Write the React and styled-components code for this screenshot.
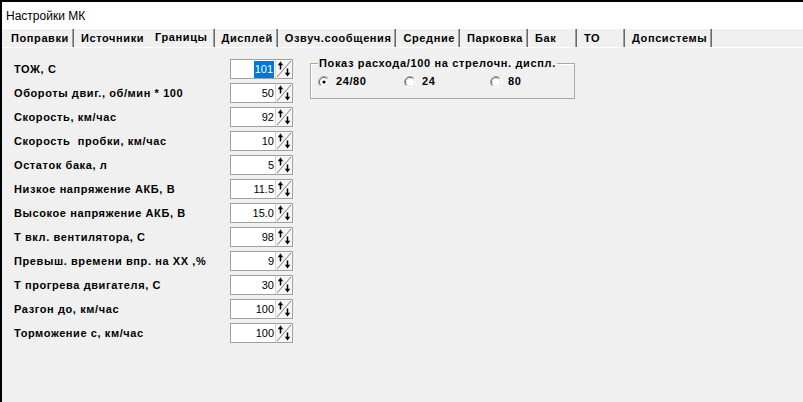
import React from "react";
import styled, { createGlobalStyle } from "styled-components";

const GlobalStyle = createGlobalStyle`
  html, body {
    margin: 0;
    padding: 0;
    background: #f0f0f0;
  }
  body {
    font-family: "Liberation Sans", Arial, sans-serif;
    color: #000;
  }
`;

const Window = styled.div`
  width: 803px;
  height: 402px;
  box-sizing: border-box;
  border-top: 2px solid #000;
  border-left: 2px solid #000;
  background: #f0f0f0;
  display: flex;
  flex-direction: column;
  overflow: hidden;
`;

const TitleBar = styled.div`
  height: 27px;
  flex: none;
  background: #fff;
  display: flex;
  align-items: center;
  padding-left: 4px;
  font-size: 12px;
`;

const TabStrip = styled.div`
  height: 18px;
  flex: none;
  display: flex;
  align-items: stretch;
  padding-left: 2px;
  border-bottom: 1px solid #fff;
`;

const Tab = styled.div`
  display: flex;
  align-items: center;
  box-sizing: border-box;
  min-width: ${(p) => p.$min || 0}px;
  padding: ${(p) => (p.$active ? "0 6px 2px 8px" : "0 4px 0 7px")};
  margin-left: ${(p) => (p.$active ? "-2px" : "0")};
  border-right: 1px solid #696969;
  box-shadow: -1px 0 0 #a0a0a0 inset;
  font-size: 11px;
  font-weight: bold;
  letter-spacing: 0.6px;
  white-space: nowrap;
  position: relative;
  z-index: ${(p) => (p.$active ? 1 : 0)};
  background: #f0f0f0;
`;

const Body = styled.div`
  display: flex;
  align-items: flex-start;
  padding: 9px 0 0 12px;
`;

const Form = styled.div`
  display: flex;
  flex-direction: column;
`;

const Row = styled.div`
  display: grid;
  grid-template-columns: 216px 63px;
  align-items: center;
  height: 24px;
`;

const Label = styled.span`
  font-size: 11px;
  font-weight: bold;
  letter-spacing: 0.6px;
  white-space: pre;
`;

const Spin = styled.div`
  display: flex;
  height: 20px;
  box-sizing: border-box;
  border: 1px solid #a0a0a0;
  background: #fff;
`;

const Value = styled.div`
  flex: 1;
  display: flex;
  align-items: center;
  justify-content: flex-end;
  padding-right: 1px;
  font-size: 11px;
`;

const Selected = styled.span`
  background: #0078d7;
  color: #fff;
  padding: 2px 1px 2px 1px;
  line-height: 13px;
`;

const Arrows = styled.div`
  width: 16px;
  flex: none;
  border-left: 1px solid #d8d8d8;
  background: #f6f6f6;
  display: flex;
  align-items: center;
`;

const Group = styled.fieldset`
  margin: 0 0 0 17px;
  padding: 0 7px 0 7px;
  width: 265px;
  height: 42px;
  box-sizing: border-box;
  border: 1px solid #a8a8a8;
  box-shadow: 1px 1px 0 #fff inset;
`;

const Legend = styled.legend`
  padding: 0 1px;
  font-size: 11px;
  font-weight: bold;
  letter-spacing: 0.65px;
  line-height: 13px;
`;

const RadioRow = styled.div`
  display: grid;
  grid-template-columns: 86px 86px auto;
  margin-top: 5px;
`;

const RadioItem = styled.label`
  display: flex;
  align-items: center;
  gap: 6px;
  font-size: 11px;
  font-weight: bold;
  letter-spacing: 0.6px;
  line-height: 13px;
`;

const SpinGlyph = () => (
  <svg width="16" height="18" viewBox="0 0 16 18">
    <line x1="1" y1="17" x2="15" y2="1" stroke="#7a7a7a" strokeWidth="1" />
    <line x1="4.5" y1="3" x2="4.5" y2="9.5" stroke="#000" strokeWidth="1.5" />
    <path d="M1.8 5.2 L4.5 1.5 L7.2 5.2 Z" fill="#000" />
    <line x1="11.5" y1="8.5" x2="11.5" y2="15" stroke="#000" strokeWidth="1.5" />
    <path d="M8.8 12.8 L11.5 16.5 L14.2 12.8 Z" fill="#000" />
  </svg>
);

const RadioGlyph = ({ checked }) => (
  <svg width="12" height="12" viewBox="0 0 12 12">
    <circle cx="6" cy="6" r="5" fill="#fff" />
    <path d="M9.9 2.1 A5.5 5.5 0 0 0 2.1 9.9" fill="none" stroke="#a0a0a0" />
    <path d="M9.2 2.8 A4.5 4.5 0 0 0 2.8 9.2" fill="none" stroke="#696969" />
    <path d="M2.1 9.9 A5.5 5.5 0 0 0 9.9 2.1" fill="none" stroke="#fff" />
    <path d="M2.8 9.2 A4.5 4.5 0 0 0 9.2 2.8" fill="none" stroke="#e3e3e3" />
    {checked && <circle cx="6" cy="6" r="1.6" fill="#000" />}
  </svg>
);

const tabs = [
  { name: "Поправки" },
  { name: "Источники" },
  { name: "Границы", active: true },
  { name: "Дисплей" },
  { name: "Озвуч.сообщения" },
  { name: "Средние" },
  { name: "Парковка" },
  { name: "Бак", min: 49 },
  { name: "ТО", min: 48 },
  { name: "Допсистемы" },
];

const fields = [
  ["ТОЖ, С", "101", true],
  ["Обороты двиг., об/мин * 100", "50"],
  ["Скорость, км/час", "92"],
  ["Скорость  пробки, км/час", "10"],
  ["Остаток бака, л", "5"],
  ["Низкое напряжение АКБ, В", "11.5"],
  ["Высокое напряжение АКБ, В", "15.0"],
  ["Т вкл. вентилятора, С", "98"],
  ["Превыш. времени впр. на ХХ ,%", "9"],
  ["Т прогрева двигателя, С", "30"],
  ["Разгон до, км/час", "100"],
  ["Торможение с, км/час", "100"],
];

const radios = [
  { label: "24/80", checked: true },
  { label: "24" },
  { label: "80" },
];

const App = () => (
  <Window>
    <GlobalStyle />
    <TitleBar>Настройки МК</TitleBar>
    <TabStrip>
      {tabs.map((t) => (
        <Tab key={t.name} $active={t.active} $min={t.min}>
          {t.name}
        </Tab>
      ))}
    </TabStrip>
    <Body>
      <Form>
        {fields.map(([label, value, sel]) => (
          <Row key={label}>
            <Label>{label}</Label>
            <Spin>
              <Value>{sel ? <Selected>{value}</Selected> : value}</Value>
              <Arrows>
                <SpinGlyph />
              </Arrows>
            </Spin>
          </Row>
        ))}
      </Form>
      <Group>
        <Legend>Показ расхода/100 на стрелочн. диспл.</Legend>
        <RadioRow>
          {radios.map((r) => (
            <RadioItem key={r.label}>
              <RadioGlyph checked={r.checked} />
              {r.label}
            </RadioItem>
          ))}
        </RadioRow>
      </Group>
    </Body>
  </Window>
);

export default App;
